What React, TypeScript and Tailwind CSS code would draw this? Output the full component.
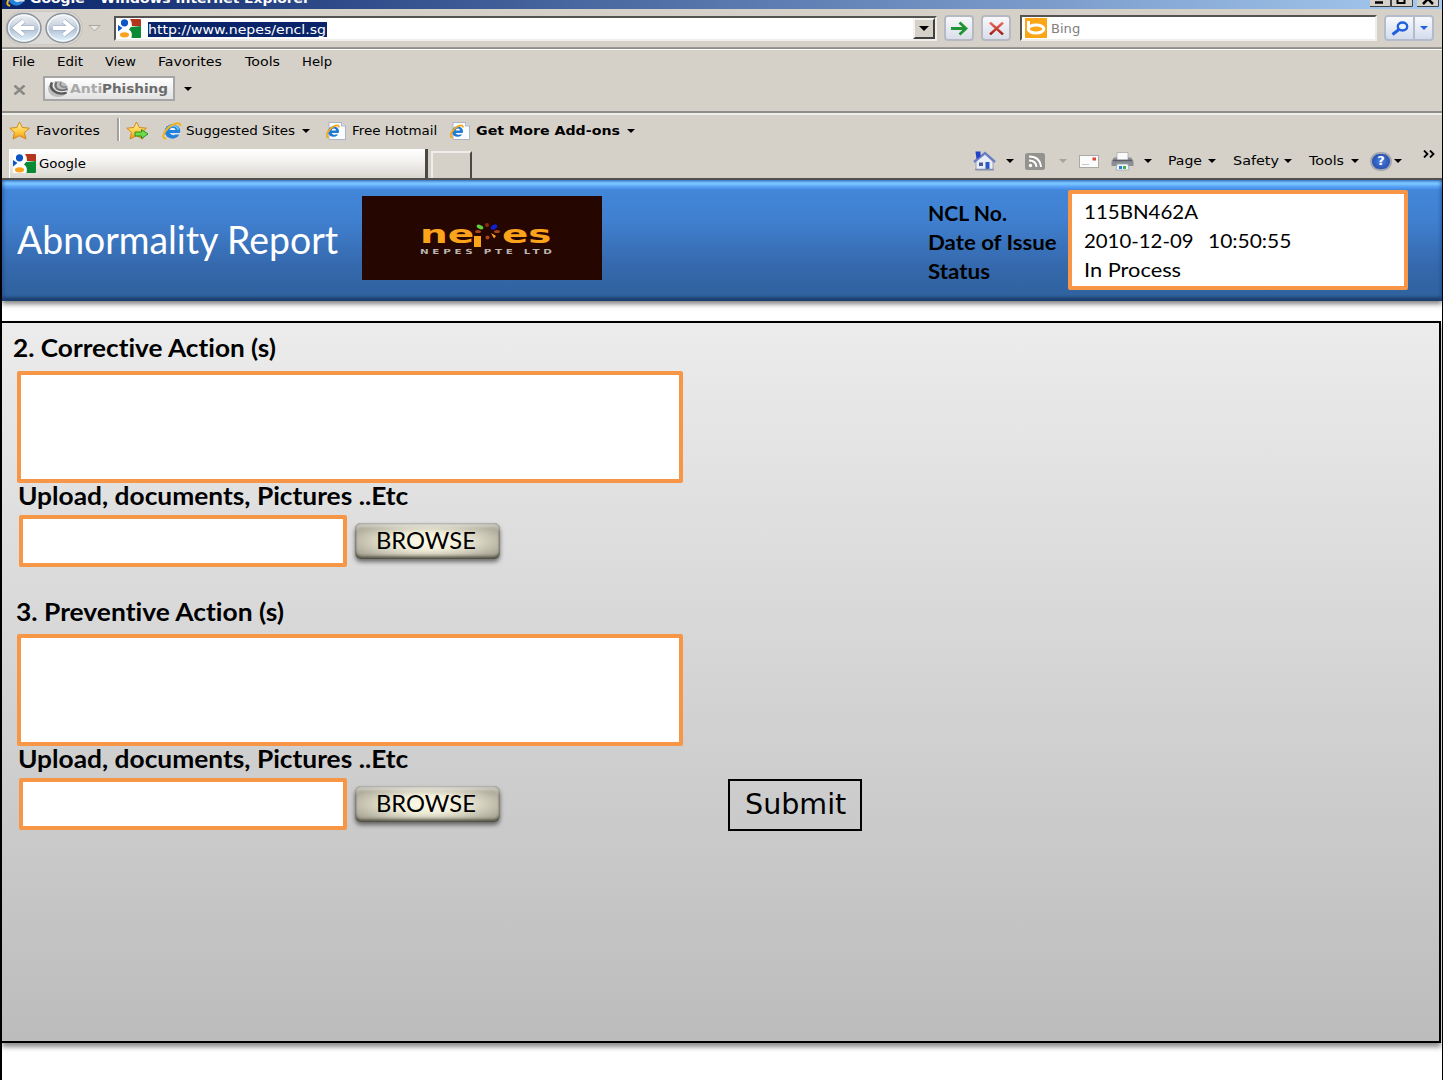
import { type ReactNode } from "react";

const UI = "font-['DejaVu_Sans',sans-serif] text-[12px] leading-[16px] ";
const BODY = "font-[Lato,sans-serif] [font-variant-ligatures:none] ";

function T({ c = "", children }: { c?: string; children: ReactNode }) {
  return <span className={"block origin-left whitespace-pre " + c}>{children}</span>;
}

function Caret({ c = "text-black" }: { c?: string }) {
  return (
    <svg className={"block h-[4px] w-[8px] shrink-0 " + c} viewBox="0 0 8 4">
      <path d="M0 0H8L4 4Z" fill="currentColor" />
    </svg>
  );
}

function GoogleIcon() {
  return (
    <svg className="block h-[19px] w-[23px] shrink-0" viewBox="0 0 23 19">
      <rect width="23" height="19" rx="1" fill="#fff" />
      <path d="M12 0H22Q23 0 23 1V7H14Q14.500 3 12 0Z" fill="#b5341c" />
      <path d="M13 8L23 7V18Q23 19 22 19H13.500Q15 13 11 10.500Z" fill="#0b8a35" />
      <path d="M0 6L4.500 9L0 12.500Z" fill="#0d55c4" />
      <ellipse cx="6.500" cy="3.800" rx="3.600" ry="3.600" fill="#0d55c4" />
      <ellipse cx="6.500" cy="15.800" rx="4.600" ry="2.600" fill="#fba31c" />
    </svg>
  );
}

function IeIcon({ c = "h-[20px] w-[22px]" }: { c?: string }) {
  return (
    <svg className={"block shrink-0 " + c} viewBox="0 0 22 20">
      <ellipse cx="11.500" cy="10.500" rx="8.600" ry="8" fill="#2382dc" />
      <path d="M5 9Q7 4 12 4Q16.500 4 18 8.500" fill="none" stroke="#74c6f8" strokeWidth="1.800" />
      <path d="M8.300 9Q9 6.500 11.800 6.500Q14.500 6.500 15 9Z" fill="#eef4f8" />
      <path d="M8.300 12.300H20.500V14H15Q11 16 8.300 12.300Z" fill="#dfe6ea" />
      <path d="M4.500 18.500Q-.5 18.500 2.500 12Q6.500 5 14 2.200Q20.500 0 20.500 4.500" fill="none" stroke="#f3b01f" strokeWidth="2.200" />
    </svg>
  );
}

function IePage() {
  return (
    <svg className="block h-[18px] w-[20px] shrink-0" viewBox="0 0 20 18">
      <path d="M3 .5H15.500L19.500 4V17.500H3Z" fill="#fafcff" stroke="#a9b4c4" />
      <path d="M15.500 .5V4H19.500" fill="#dde4ee" stroke="#a9b4c4" />
      <ellipse cx="7.500" cy="9.500" rx="5.500" ry="5.300" fill="#1f7ad4" />
      <path d="M5.500 8.500Q6 6.500 8 6.500Q10 6.500 10 8.500Z" fill="#fff" />
      <path d="M5.500 11H13.500V12.500H9.500Q7 13.500 5.500 11Z" fill="#fff" />
      <path d="M2.500 15.500Q-.5 15 1.500 10.500Q4 6 9 3.800Q13 2.500 13 5.500" fill="none" stroke="#f3a81f" strokeWidth="1.800" />
    </svg>
  );
}

function Star({ add = false }: { add?: boolean }) {
  return (
    <svg className="block h-[19px] w-[22px] shrink-0" viewBox="0 0 22 19">
      <defs>
        <linearGradient id="star" x1="0" y1="0" x2="0" y2="1">
          <stop offset="0" stopColor="#fff3b0" />
          <stop offset=".6" stopColor="#ffc93a" />
          <stop offset="1" stopColor="#f0921a" />
        </linearGradient>
      </defs>
      <path d="M10.500 1L13.300 6.500L20.500 7.200L15.300 11.500L17 18L10.500 14.800L4 18L5.500 11.500L.8 7.200L7.800 6.500Z" fill="url(#star)" stroke="#cf8a1c" strokeLinejoin="round" />
      {add && <path d="M9 11H15.500V8.500L22 13L15.500 17.500V15H9Z" fill="#6fdc4a" stroke="#2c8f1e" />}
    </svg>
  );
}

function NavCircle({ back = false }: { back?: boolean }) {
  return (
    <svg className="block h-[32px] w-[36px] shrink-0" viewBox="0 0 36 32">
      <defs>
        <linearGradient id="orb" x1="0" y1="0" x2="0" y2="1">
          <stop offset="0" stopColor="#f2f4f7" />
          <stop offset=".4" stopColor="#ccd5e1" />
          <stop offset=".55" stopColor="#b4c2d6" />
          <stop offset="1" stopColor="#e6f9ff" />
        </linearGradient>
      </defs>
      <ellipse cx="18" cy="16" rx="17" ry="14.500" fill="url(#orb)" stroke="#8e949c" strokeWidth="1.500" />
      <ellipse cx="18" cy="16" rx="15.300" ry="12.800" fill="none" stroke="#f6f9fc" strokeWidth="1.200" />
      <g transform={back ? "matrix(-1 0 0 1 36 0)" : undefined}>
        <path d="M8 16H26M18.500 9L27 16L18.500 23" fill="none" stroke="#9aaac0" strokeWidth="5" />
        <path d="M8 16H26M18.500 9L27 16L18.500 23" fill="none" stroke="#fff" strokeWidth="3.800" />
      </g>
    </svg>
  );
}

function TitleBar() {
  return (
    <div className="relative flex h-[9px] items-end justify-between overflow-hidden bg-[linear-gradient(90deg,#0a246a,#a6caf0)] pl-[4px]">
      <div className="flex h-[20px] items-end">
        <div className="h-[20px] w-[24px] pb-[2px]">
          <IeIcon c="h-[18px] w-[20px]" />
        </div>
        <div className="h-[18px] w-[290px]">
          <T c={UI + "scale-x-[1.157] font-bold text-white"}>Google - Windows Internet Explorer</T>
        </div>
      </div>
      <div className="flex h-[9px] pr-[3px]">
        <svg className="block h-[7px] w-[21px]" viewBox="0 0 21 7">
          <rect width="21" height="7" fill="#d5d1c9" />
          <path d="M5 2.500H13" stroke="#000" strokeWidth="2.500" />
          <path d="M20.500 0V6.500H0" stroke="#404040" fill="none" />
        </svg>
        <svg className="block h-[7px] w-[22px]" viewBox="0 0 22 7">
          <rect width="22" height="7" fill="#d5d1c9" />
          <path d="M6.500 -2V3H13.500V-2" stroke="#000" strokeWidth="2" fill="none" />
          <path d="M21.500 0V6.500H0M.5 0V7" stroke="#404040" fill="none" />
        </svg>
        <svg className="ml-[4px] block h-[7px] w-[22px]" viewBox="0 0 22 7">
          <rect width="22" height="7" fill="#d5d1c9" />
          <path d="M6 4L11 -1L16 4" stroke="#000" strokeWidth="2.500" fill="none" />
          <path d="M21.500 0V6.500H0" stroke="#404040" fill="none" />
        </svg>
      </div>
    </div>
  );
}

function AddressBar() {
  return (
    <div className="flex h-[38px] items-center">
      <div className="ml-[4px] flex w-[76px] gap-[3px] rounded-full bg-[#dcdad6] shadow-[0_0_1px_#8a8a8c]">
        <NavCircle back />
        <NavCircle />
      </div>
      <svg className="ml-[6px] block h-[7px] w-[13px]" viewBox="0 0 13 7">
        <path d="M1 .5H12L6.500 6Z" fill="#e8e6e1" stroke="#a9a69f" />
      </svg>
      <div className="ml-[13px] flex h-[25px] w-[823px] items-center border-2 border-t-[#55534f] border-r-[#f0eeea] border-b-[#f0eeea] border-l-[#55534f] bg-white pl-[2px]">
        <GoogleIcon />
        <div className="mt-[2px] ml-[7px] h-[15px] w-[179px] bg-[#0a246a]">
          <T c={UI + "scale-x-[1.172] text-white leading-[16px]"}>http://www.nepes/encl.sg</T>
        </div>
        <div className="ml-auto flex h-[21px] w-[22px] items-center justify-center border-2 border-t-[#f5f3ef] border-r-[#404040] border-b-[#404040] border-l-[#f5f3ef] bg-[#d5d1c9]">
          <svg className="block h-[5px] w-[10px]" viewBox="0 0 10 5"><path d="M0 0H10L5 5Z" /></svg>
        </div>
      </div>
      <div className="ml-[7px] flex h-[26px] w-[30px] items-center justify-center rounded border-2 border-[#b6b9c2] bg-[linear-gradient(#f8f8fa,#d9dee9)]">
        <svg className="block h-[15px] w-[17px]" viewBox="0 0 17 15"><path d="M0 7.500H14M8.500 1.500L15 7.500L8.500 13.500" fill="none" stroke="#1f9433" strokeWidth="2.800" /></svg>
      </div>
      <div className="ml-[7px] flex h-[26px] w-[30px] items-center justify-center rounded border-2 border-[#b6b9c2] bg-[linear-gradient(#f8f8fa,#d9dee9)]">
        <svg className="block h-[13px] w-[15px]" viewBox="0 0 15 13">
          <defs><linearGradient id="stop" x1="0" y1="0" x2="0" y2="1"><stop offset="0" stopColor="#ee6a5c" /><stop offset="1" stopColor="#a31a10" /></linearGradient></defs>
          <path d="M1 .5L14 12.500M14 .5L1 12.500" fill="none" stroke="url(#stop)" strokeWidth="2.400" />
        </svg>
      </div>
      <div className="ml-[9px] flex h-[26px] w-[357px] items-center border-2 border-t-[#55534f] border-r-[#f0eeea] border-b-[#f0eeea] border-l-[#55534f] bg-white pl-[3px]">
        <svg className="block h-[20px] w-[22px]" viewBox="0 0 22 20">
          <rect width="22" height="20" fill="#fba616" />
          <path d="M3.500 3V11" stroke="#fff" strokeWidth="3" />
          <ellipse cx="11" cy="11" rx="7.800" ry="4" fill="none" stroke="#fff" strokeWidth="3" />
        </svg>
        <div className="mt-[2px] ml-[4px]"><T c={UI + "scale-x-[1.09] text-[#808080]"}>Bing</T></div>
      </div>
      <div className="ml-[7px] flex h-[26px] w-[50px] rounded border-2 border-[#b3bccb] bg-[linear-gradient(#f8f9fc,#d3dcee)]">
        <div className="flex w-[29px] items-center justify-center border-r-2 border-[#b3bccb]">
          <svg className="block h-[15px] w-[18px]" viewBox="0 0 18 15">
            <ellipse cx="11.500" cy="5.500" rx="4.700" ry="4" fill="#e8f0fd" stroke="#2160dc" strokeWidth="2.400" />
            <path d="M8 8.500L1.500 13.500" stroke="#2160dc" strokeWidth="3" />
          </svg>
        </div>
        <div className="flex flex-1 items-center justify-center"><Caret c="text-[#1f5fe0]" /></div>
      </div>
    </div>
  );
}

function MenuBar() {
  return (
    <div className="flex h-[25px] items-center border-t border-white pl-[10px]">
      <div className="w-[45px]"><T c={UI + "scale-x-[1.145]"}>File</T></div>
      <div className="w-[48px]"><T c={UI + "scale-x-[1.118]"}>Edit</T></div>
      <div className="w-[53px]"><T c={UI + "scale-x-[1.088]"}>View</T></div>
      <div className="w-[87px]"><T c={UI + "scale-x-[1.18]"}>Favorites</T></div>
      <div className="w-[57px]"><T c={UI + "scale-x-[1.184]"}>Tools</T></div>
      <T c={UI + "scale-x-[1.097]"}>Help</T>
    </div>
  );
}

function AntiPhishing() {
  return (
    <div className="flex h-[37px] items-start pt-[2px]">
      <svg className="mt-[9px] ml-[11px] block h-[10px] w-[13px]" viewBox="0 0 13 10"><path d="M1.500 .5L11.500 9.500M11.500 .5L1.500 9.500" stroke="#8b8985" strokeWidth="2.600" /></svg>
      <div className="ml-[17px] flex h-[25px] w-[132px] items-center border-2 border-[#a5a5a5] bg-[linear-gradient(#fff,#e2e2e2)] pl-[2px]">
        <svg className="block h-[18px] w-[22px]" viewBox="0 0 22 18">
          <ellipse cx="11" cy="9" rx="10" ry="8" fill="#bcbcbc" />
          <path d="M5 2.500Q2 7 7 11Q12 15 19.500 12.500" fill="none" stroke="#5a5a5a" strokeWidth="2.600" />
          <path d="M9.500 2Q7 6.500 11 9.500Q15 11.500 20.500 9" fill="none" stroke="#6e6e6e" strokeWidth="2" />
          <path d="M14 2Q12 5 15.500 7L20 7" fill="none" stroke="#858585" strokeWidth="1.500" />
          <path d="M7.500 1.500Q4.500 7 9.500 10.500Q14 13 20 11" fill="none" stroke="#f5f5f5" strokeWidth="1" />
        </svg>
        <div className="ml-[1px] w-[32px]"><T c={UI + "scale-x-[1.08] text-[13px] font-bold text-[#a9a9a9]"}>Anti</T></div>
        <T c={UI + "scale-x-[1.043] text-[13px] font-bold text-[#6b6b6b]"}>Phishing</T>
      </div>
      <div className="mt-[11px] ml-[9px]"><Caret /></div>
    </div>
  );
}

function FavoritesBar() {
  return (
    <div className="flex h-[37px] items-center border-t-2 border-t-[#8f8d8a] shadow-[inset_0_2px_0_#efedea]">
      <div className="ml-[7px] w-[27px]"><Star /></div>
      <div className="w-[81px]"><T c={UI + "scale-x-[1.18]"}>Favorites</T></div>
      <div className="mr-[6px] -mt-[3px] h-[23px] w-[3px] border-r border-l-2 border-r-white border-l-[#a3a09b]" />
      <div className="w-[35px]"><Star add /></div>
      <div className="w-[25px]"><IeIcon c="h-[18px] w-[22px]" /></div>
      <div className="w-[116px]"><T c={UI + "scale-x-[1.125]"}>Suggested Sites</T></div>
      <div className="w-[24px]"><Caret /></div>
      <div className="w-[26px]"><IePage /></div>
      <div className="w-[98px]"><T c={UI + "scale-x-[1.12]"}>Free Hotmail</T></div>
      <div className="w-[26px]"><IePage /></div>
      <div className="w-[151px]"><T c={UI + "scale-x-[1.183] font-bold"}>Get More Add-ons</T></div>
      <Caret />
    </div>
  );
}

function TabRow() {
  return (
    <div className="flex h-[32px] border-b-2 border-[#55534f]">
      <div className="mt-[1px] ml-[7px] flex w-[419px] items-center border-r-[3px] border-l border-r-[#4a4845] border-l-white bg-[linear-gradient(#fff,#f4f3f1_40%,#d9d6cf)] pl-[3px]">
        <GoogleIcon />
        <div className="ml-[3px]"><T c={UI + "scale-x-[1.11]"}>Google</T></div>
      </div>
      <div className="mt-[3px] ml-[3px] w-[41px] border-t-2 border-r-2 border-l-2 border-t-[#efedea] border-r-[#4a4845] border-l-[#efedea]" />
      <div className="ml-[501px] flex h-[26px] items-center">
        <svg className="block h-[20px] w-[23px]" viewBox="0 0 23 20">
          <path d="M3 10L12 2.500L20 10V19H3Z" fill="#e9edf8" stroke="#9aa2b8" />
          <path d="M1 11L12 2L22 11" fill="none" stroke="#6a7fc0" strokeWidth="2.400" />
          <path d="M2.500 .5H7.500V5.500L3.500 8Z" fill="#2240c8" />
          <rect x="12.500" y="11" width="4" height="7" fill="#2c57c4" />
          <rect x="6" y="11.500" width="4" height="3.500" fill="#465a90" />
          <path d="M2 18.500H21" stroke="#8791ac" strokeWidth="1.500" />
        </svg>
        <div className="ml-[10px]"><Caret /></div>
        <svg className="ml-[11px] block h-[17px] w-[20px]" viewBox="0 0 20 17">
          <rect width="20" height="17" rx="2.500" fill="#94928e" />
          <path d="M4 7.500Q11 7.500 11.500 14M4 3.500Q15 3.500 16 14" fill="none" stroke="#fff" strokeWidth="1.800" />
          <circle cx="5.500" cy="12.500" r="1.700" fill="#fff" />
        </svg>
        <div className="ml-[14px]"><Caret c="text-[#a7a49e]" /></div>
        <svg className="ml-[12px] block h-[13px] w-[20px]" viewBox="0 0 20 13">
          <rect x=".5" y=".5" width="19" height="12" fill="#fbfbfb" stroke="#aba9a6" />
          <path d="M3 9.500H10" stroke="#c8c8c8" />
          <rect x="13.500" y="2.500" width="3.500" height="3" fill="#e0432f" />
        </svg>
        <svg className="ml-[12px] block h-[19px] w-[23px]" viewBox="0 0 23 19">
          <path d="M6 .5H17V8H6Z" fill="#fafafa" stroke="#aaa" strokeWidth=".8" />
          <path d="M3 5.500H6V8H17V5.500H20L22.500 9V14H.5V9Z" fill="#8b8e94" />
          <path d="M2 8.500H21" stroke="#5c5f66" strokeWidth="1.500" />
          <path d="M6 12H17L18 18H5Z" fill="#f4f9ff" stroke="#9aa" strokeWidth=".8" />
          <path d="M8 15.500H11" stroke="#2e7ed6" strokeWidth="3" />
          <path d="M12 15.500H15" stroke="#3fb04a" strokeWidth="3" />
        </svg>
        <div className="ml-[10px] w-[24px]"><Caret /></div>
        <div className="w-[40px]"><T c={UI + "scale-x-[1.17]"}>Page</T></div>
        <div className="w-[25px]"><Caret /></div>
        <div className="w-[51px]"><T c={UI + "scale-x-[1.198]"}>Safety</T></div>
        <div className="w-[25px]"><Caret /></div>
        <div className="w-[42px]"><T c={UI + "scale-x-[1.184]"}>Tools</T></div>
        <div className="w-[19px]"><Caret /></div>
        <div className="flex h-[19px] w-[22px] items-center justify-center rounded-full border-2 border-[#a3a6ae] bg-[radial-gradient(#4b7fe0,#1a3f9e)]">
          <T c={UI + "origin-center text-[13px] font-bold text-white"}>?</T>
        </div>
        <div className="ml-[2px] w-[29px]"><Caret /></div>
        <svg className="-mt-[15px] block h-[8px] w-[12px]" viewBox="0 0 12 8"><path d="M1 .5L4.500 4L1 7.500M7 .5L10.500 4L7 7.500" fill="none" stroke="#000" strokeWidth="1.800" /></svg>
      </div>
    </div>
  );
}

function NepesLogo() {
  return (
    <div className="h-[84px] w-[240px] bg-[#260600] px-[58px] pt-[25px]">
      <div className="flex h-[27px] items-start text-[#fba31a]">
        <div className="w-[54px]"><T c="scale-x-[1.56] font-['DejaVu_Sans',sans-serif] text-[25px] leading-[27px] font-bold">ne</T></div>
        <svg className="block h-[28px] w-[28px] shrink-0" viewBox="0 0 28 28">
          <path d="M0 15H7V26H0Z" fill="#fba31a" />
          <ellipse cx="6" cy="6" rx="3.500" ry="2" transform="rotate(25 6 6)" fill="#5fd140" />
          <circle cx="13" cy="4" r="2" fill="#8c2a10" />
          <ellipse cx="20" cy="6" rx="3.500" ry="2.200" transform="rotate(-30 20 6)" fill="#0d22d0" />
          <ellipse cx="4" cy="10.500" rx="3" ry="1.600" fill="#a8431c" />
          <ellipse cx="23" cy="10.500" rx="3" ry="1.600" fill="#a8431c" />
          <circle cx="13.500" cy="16.500" r="2" fill="#a8431c" />
          <path d="M17 12L22 15L20 17.500Z" fill="#fba31a" />
        </svg>
        <T c="scale-x-[1.55] font-['DejaVu_Sans',sans-serif] text-[25px] leading-[27px] font-bold">es</T>
      </div>
      <T c="scale-x-[1.48] font-['DejaVu_Sans',sans-serif] text-[7px] leading-[8px] font-bold tracking-[2.5px] text-[#b9b4ae] h-[8px]">NEPES PTE LTD</T>
    </div>
  );
}

function Header() {
  return (
    <div className="relative z-10 flex h-[121px] items-start bg-[linear-gradient(#4a8ee6_0,#6fb9fb_2px,#7cc6ff_4px,#5ea9fa_6px,#4f97ee_8px,#4286d8_10px,#4080d0_40px,#3569ad_85px,#30629f_115px,#1f4272_119px,#1c3a66_121px)] pl-[15px] shadow-[0_3px_5px_rgba(0,0,0,.5),inset_2px_0_3px_rgba(30,70,130,.45),inset_-2px_0_3px_rgba(30,70,130,.45)]">
      <div className="w-[345px] pt-[35px]"><T c={BODY + "scale-x-[.983] text-[38px] leading-[48px] text-white"}>Abnormality Report</T></div>
      <div className="mt-[16px]"><NepesLogo /></div>
      <div className="mt-[19px] ml-[326px] w-[140px]">
        <T c={BODY + "scale-x-[1.058] text-[20px] leading-[29px] font-bold"}>NCL No.</T>
        <T c={BODY + "scale-x-[1.11] text-[20px] leading-[29px] font-bold"}>Date of Issue</T>
        <T c={BODY + "scale-x-[1.117] text-[20px] leading-[29px] font-bold"}>Status</T>
      </div>
      <div className="mt-[10px] h-[100px] w-[340px] rounded-[2px] border-4 border-[#f79646] bg-white pt-[3px] pl-[12px]">
        <T c={BODY + "scale-x-[1.024] text-[20px] leading-[29px]"}>115BN462A</T>
        <div className="flex">
          <div className="w-[124px]"><T c={BODY + "scale-x-[1.018] text-[20px] leading-[29px]"}>2010-12-09</T></div>
          <T c={BODY + "scale-x-[1.048] text-[20px] leading-[29px]"}>10:50:55</T>
        </div>
        <T c={BODY + "scale-x-[1.09] text-[20px] leading-[29px]"}>In Process</T>
      </div>
    </div>
  );
}

function Upload() {
  return (
    <div className="-mt-px h-[86px]">
      <div className="h-[33px] pl-[16px]"><T c={BODY + "scale-x-[1.097] text-[24px] leading-[28px] font-bold"}>Upload, documents, Pictures ..Etc</T></div>
      <div className="flex pl-[17px]">
        <input aria-label="File path" className="block h-[52px] w-[328px] rounded-[2px] border-4 border-[#f79646] bg-white outline-none" />
        <button className="mt-[8px] ml-[8px] flex h-[36px] w-[145px] items-center rounded-[6px] bg-[radial-gradient(ellipse_at_center,#fffdea_0,#efecd8_35%,#b5b2a2_75%,#989585_100%)] pl-[21px] shadow-[0_3px_4px_rgba(0,0,0,.5),inset_0_4px_3px_rgba(255,255,255,.45),inset_0_-3px_3px_rgba(60,58,45,.6),inset_0_0_2px_1px_rgba(70,70,60,.7)]">
          <T c={BODY + "scale-x-[.99] text-[24px] leading-[30px] -mt-[2px]"}>BROWSE</T>
        </button>
      </div>
    </div>
  );
}

function FormPanel() {
  return (
    <div className="relative mt-[20px] mr-px h-[722px] border-2 border-l-0 border-black bg-[linear-gradient(#ececec,#bcbcbc)] shadow-[0_4px_5px_rgba(0,0,0,.45)]">
      <div className="h-[48px] pt-[9px] pl-[11px]"><T c={BODY + "scale-x-[1.092] text-[24px] leading-[32px] font-bold"}>2. Corrective Action (s)</T></div>
      <textarea aria-label="Corrective action" className="ml-[15px] block h-[112px] w-[666px] resize-none rounded-[2px] border-4 border-[#f79646] bg-white outline-none" />
      <Upload />
      <div className="h-[66px] pt-[28px] pl-[14px]"><T c={BODY + "scale-x-[1.1] text-[24px] leading-[32px] font-bold"}>3. Preventive Action (s)</T></div>
      <textarea aria-label="Preventive action" className="ml-[15px] block h-[112px] w-[666px] resize-none rounded-[2px] border-4 border-[#f79646] bg-white outline-none" />
      <div className="flex">
        <div className="w-[726px]"><Upload /></div>
        <button className="mt-[33px] block h-[52px] w-[134px] border-2 border-black pl-[15px]">
          <T c="scale-x-[1.02] text-left font-['DejaVu_Sans',sans-serif] text-[28px] leading-[48px]">Submit</T>
        </button>
      </div>
    </div>
  );
}

export default function App() {
  return (
    <div className="h-[1080px] w-[1443px] overflow-hidden border-r border-l-2 border-black bg-white text-black">
      <div className="h-[180px] bg-[#d5d1c9]">
        <TitleBar />
        <AddressBar />
        <div className="h-[2px] bg-[linear-gradient(#a19e99,#8a8884)]" />
        <MenuBar />
        <AntiPhishing />
        <FavoritesBar />
        <TabRow />
      </div>
      <Header />
      <FormPanel />
    </div>
  );
}
